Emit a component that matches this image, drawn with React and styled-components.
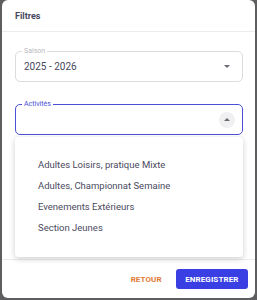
import React from 'react';
import styled, { createGlobalStyle } from 'styled-components';

const GlobalStyle = createGlobalStyle`
  html, body {
    margin: 0;
    padding: 0;
    background: #5e5e60;
    font-family: Roboto, "Liberation Sans", sans-serif;
  }
`;

// Dialog window
const Dialog = styled.div`
  position: relative;
  width: 253px;
  height: 298px;
  margin-left: 2px;
  background: #fff;
  border-radius: 6px;
  display: flex;
  flex-direction: column;
  overflow: hidden;
`;

const Header = styled.div`
  height: 31px;
  flex-shrink: 0;
  display: flex;
  align-items: center;
  padding: 0 13px;
  border-bottom: 1px solid #ececef;
  font-size: 9px;
  font-weight: 700;
  color: #47475c;
`;

const Content = styled.div`
  position: relative;
  flex: 1;
  padding: 19px 12px 0 13px;
  display: flex;
  flex-direction: column;
  gap: 22px;
`;

// Outlined select field
const Field = styled.div`
  position: relative;
  height: 31px;
  border: ${(p) => (p.$focused ? '1.5px solid #4b50d6' : '1px solid #dcdce0')};
  border-radius: 5px;
  display: flex;
  align-items: center;
  justify-content: space-between;
  padding: 0 7px 0 8px;
  box-sizing: border-box;
`;

const Label = styled.span`
  position: absolute;
  top: -5px;
  left: 6px;
  padding: 0 2px;
  background: #fff;
  font-size: 7px;
  line-height: 8px;
  color: ${(p) => (p.$focused ? '#4b50d6' : '#b9b9c0')};
`;

const Value = styled.span`
  font-size: 10px;
  color: #47475c;
`;

const ArrowButton = styled.span`
  width: 16px;
  height: 16px;
  border-radius: 50%;
  display: flex;
  align-items: center;
  justify-content: center;
  background: ${(p) => (p.$open ? '#f0f0f2' : 'transparent')};
`;

const Arrow = ({ up }) => (
  <svg width="6" height="3" viewBox="0 0 6 3">
    <path d={up ? 'M0 3 L3 0 L6 3 Z' : 'M0 0 L6 0 L3 3 Z'} fill="#6a6a72" />
  </svg>
);

// Dropdown menu (overlay)
const Menu = styled.ul`
  position: absolute;
  top: 105px;
  left: 13px;
  width: 228px;
  height: 120px;
  margin: 0;
  padding: 17px 0 0;
  box-sizing: border-box;
  list-style: none;
  background: #fff;
  border-radius: 3px;
  box-shadow: 0 2px 6px rgba(0, 0, 0, 0.18), 0 0 1px rgba(0, 0, 0, 0.1);
  z-index: 2;
`;

const MenuItem = styled.li`
  height: 21px;
  display: flex;
  align-items: center;
  padding-left: 23px;
  font-size: 9.5px;
  color: #4a4a5e;
`;

const Footer = styled.div`
  height: 39px;
  flex-shrink: 0;
  border-top: 1px solid #ececef;
  display: flex;
  align-items: center;
  justify-content: flex-end;
  gap: 8px;
  padding-right: 7px;
  box-sizing: border-box;
`;

const Button = styled.button`
  height: 20px;
  padding: 0 ${(p) => (p.$primary ? '9.5px' : '6px')};
  border: none;
  border-radius: 3px;
  background: ${(p) => (p.$primary ? '#3a3fe3' : 'transparent')};
  color: ${(p) => (p.$primary ? '#fff' : '#df7a35')};
  font-family: Roboto, "Liberation Sans", sans-serif;
  font-size: 8px;
  font-weight: 700;
  letter-spacing: 0.1px;
`;

const activities = [
  'Adultes Loisirs, pratique Mixte',
  'Adultes, Championnat Semaine',
  'Evenements Extérieurs',
  'Section Jeunes',
];

const App = () => (
  <>
    <GlobalStyle />
    <Dialog>
      <Header>Filtres</Header>
      <Content>
        <Field>
          <Label>Saison</Label>
          <Value>2025 - 2026</Value>
          <ArrowButton>
            <Arrow />
          </ArrowButton>
        </Field>
        <Field $focused>
          <Label $focused>Activités</Label>
          <Value />
          <ArrowButton $open>
            <Arrow up />
          </ArrowButton>
        </Field>
        <Menu>
          {activities.map((a) => (
            <MenuItem key={a}>{a}</MenuItem>
          ))}
        </Menu>
      </Content>
      <Footer>
        <Button>RETOUR</Button>
        <Button $primary>ENREGISTRER</Button>
      </Footer>
    </Dialog>
  </>
);

export default App;
